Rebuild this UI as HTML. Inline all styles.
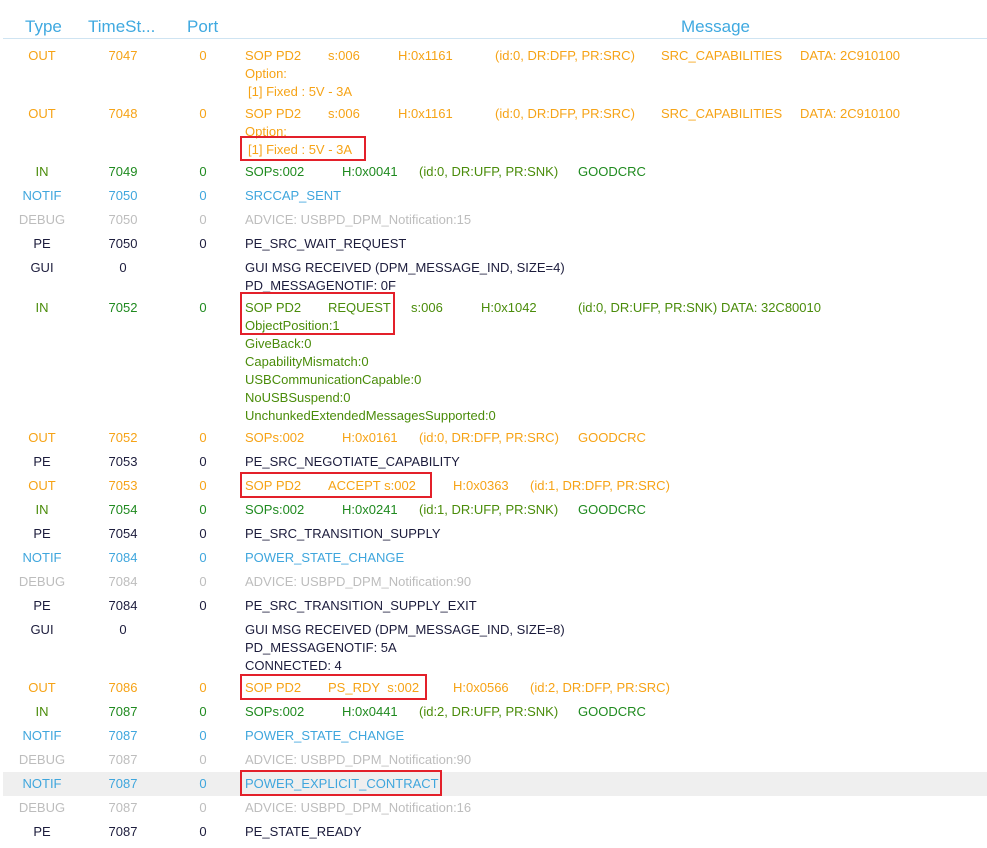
<!DOCTYPE html>
<html><head><meta charset="utf-8"><style>
*{margin:0;padding:0;box-sizing:border-box}
body{width:987px;height:848px;background:#fff;font-family:"Liberation Sans",sans-serif;font-size:13px;position:relative;overflow:hidden}
.h{position:absolute;top:17px;font-size:17px;color:#3fa9e0}
.hl{position:absolute;left:3px;top:38px;width:984px;height:1px;background:#cfe4f2}
.r{position:absolute;left:0;width:987px;line-height:18px;height:18px;margin-top:1px}
.r span{position:absolute;white-space:nowrap}
.c1{left:0;width:84px;text-align:center}
.c2{left:84px;width:78px;text-align:center}
.c3{left:183px;width:40px;text-align:center}
.o{color:#f6a316}.g{color:#1f8a1f}.gi{color:#4a8c0a}.b{color:#3fa6dd}.d{color:#bdbdbd}.k{color:#1c1c3c}
.box{position:absolute;border:2px solid #e3202a}
.hi{position:absolute;left:3px;top:772px;width:984px;height:24px;background:#efefef}
</style></head><body>
<div class="h" style="left:25px">Type</div>
<div class="h" style="left:88px">TimeSt...</div>
<div class="h" style="left:187px">Port</div>
<div class="h" style="left:681px">Message</div>
<div class="hl"></div>
<div class="hi"></div>

<div class="r o" style="top:46px"><span class="c1">OUT</span><span class="c2">7047</span><span class="c3">0</span><span style="left:245px">SOP PD2</span><span style="left:328px">s:006</span><span style="left:398px">H:0x1161</span><span style="left:495px">(id:0, DR:DFP, PR:SRC)</span><span style="left:661px">SRC_CAPABILITIES</span><span style="left:800px">DATA: 2C910100</span></div>
<div class="r o" style="top:64px"><span style="left:245px">Option:</span></div>
<div class="r o" style="top:82px"><span style="left:248px">[1] Fixed : 5V - 3A</span></div>

<div class="r o" style="top:104px"><span class="c1">OUT</span><span class="c2">7048</span><span class="c3">0</span><span style="left:245px">SOP PD2</span><span style="left:328px">s:006</span><span style="left:398px">H:0x1161</span><span style="left:495px">(id:0, DR:DFP, PR:SRC)</span><span style="left:661px">SRC_CAPABILITIES</span><span style="left:800px">DATA: 2C910100</span></div>
<div class="r o" style="top:122px"><span style="left:245px">Option:</span></div>
<div class="r o" style="top:140px"><span style="left:248px">[1] Fixed : 5V - 3A</span></div>

<div class="r g" style="top:162px"><span class="c1 gi">IN</span><span class="c2">7049</span><span class="c3">0</span><span style="left:245px">SOPs:002</span><span style="left:342px">H:0x0041</span><span style="left:419px" class="gi">(id:0, DR:UFP, PR:SNK)</span><span style="left:578px">GOODCRC</span></div>
<div class="r b" style="top:186px"><span class="c1">NOTIF</span><span class="c2">7050</span><span class="c3">0</span><span style="left:245px">SRCCAP_SENT</span></div>
<div class="r d" style="top:210px"><span class="c1">DEBUG</span><span class="c2">7050</span><span class="c3">0</span><span style="left:245px">ADVICE: USBPD_DPM_Notification:15</span></div>
<div class="r k" style="top:234px"><span class="c1">PE</span><span class="c2">7050</span><span class="c3">0</span><span style="left:245px">PE_SRC_WAIT_REQUEST</span></div>
<div class="r k" style="top:258px"><span class="c1">GUI</span><span class="c2">0</span><span style="left:245px">GUI MSG RECEIVED (DPM_MESSAGE_IND, SIZE=4)</span></div>
<div class="r k" style="top:276px"><span style="left:245px">PD_MESSAGENOTIF: 0F</span></div>

<div class="r g" style="top:298px"><span class="c1 gi">IN</span><span class="c2">7052</span><span class="c3">0</span><span style="left:245px" class="gi">SOP PD2</span><span style="left:328px" class="gi">REQUEST</span><span style="left:411px" class="gi">s:006</span><span style="left:481px" class="gi">H:0x1042</span><span style="left:578px" class="gi">(id:0, DR:UFP, PR:SNK)</span><span style="left:721px" class="gi">DATA: 32C80010</span></div>
<div class="r gi" style="top:316px"><span style="left:245px">ObjectPosition:1</span></div>
<div class="r gi" style="top:334px"><span style="left:245px">GiveBack:0</span></div>
<div class="r gi" style="top:352px"><span style="left:245px">CapabilityMismatch:0</span></div>
<div class="r gi" style="top:370px"><span style="left:245px">USBCommunicationCapable:0</span></div>
<div class="r gi" style="top:388px"><span style="left:245px">NoUSBSuspend:0</span></div>
<div class="r gi" style="top:406px"><span style="left:245px">UnchunkedExtendedMessagesSupported:0</span></div>

<div class="r o" style="top:428px"><span class="c1">OUT</span><span class="c2">7052</span><span class="c3">0</span><span style="left:245px">SOPs:002</span><span style="left:342px">H:0x0161</span><span style="left:419px">(id:0, DR:DFP, PR:SRC)</span><span style="left:578px">GOODCRC</span></div>
<div class="r k" style="top:452px"><span class="c1">PE</span><span class="c2">7053</span><span class="c3">0</span><span style="left:245px">PE_SRC_NEGOTIATE_CAPABILITY</span></div>
<div class="r o" style="top:476px"><span class="c1">OUT</span><span class="c2">7053</span><span class="c3">0</span><span style="left:245px">SOP PD2</span><span style="left:328px">ACCEPT s:002</span><span style="left:453px">H:0x0363</span><span style="left:530px">(id:1, DR:DFP, PR:SRC)</span></div>
<div class="r g" style="top:500px"><span class="c1 gi">IN</span><span class="c2">7054</span><span class="c3">0</span><span style="left:245px">SOPs:002</span><span style="left:342px">H:0x0241</span><span style="left:419px" class="gi">(id:1, DR:UFP, PR:SNK)</span><span style="left:578px">GOODCRC</span></div>
<div class="r k" style="top:524px"><span class="c1">PE</span><span class="c2">7054</span><span class="c3">0</span><span style="left:245px">PE_SRC_TRANSITION_SUPPLY</span></div>
<div class="r b" style="top:548px"><span class="c1">NOTIF</span><span class="c2">7084</span><span class="c3">0</span><span style="left:245px">POWER_STATE_CHANGE</span></div>
<div class="r d" style="top:572px"><span class="c1">DEBUG</span><span class="c2">7084</span><span class="c3">0</span><span style="left:245px">ADVICE: USBPD_DPM_Notification:90</span></div>
<div class="r k" style="top:596px"><span class="c1">PE</span><span class="c2">7084</span><span class="c3">0</span><span style="left:245px">PE_SRC_TRANSITION_SUPPLY_EXIT</span></div>
<div class="r k" style="top:620px"><span class="c1">GUI</span><span class="c2">0</span><span style="left:245px">GUI MSG RECEIVED (DPM_MESSAGE_IND, SIZE=8)</span></div>
<div class="r k" style="top:638px"><span style="left:245px">PD_MESSAGENOTIF: 5A</span></div>
<div class="r k" style="top:656px"><span style="left:245px">CONNECTED: 4</span></div>
<div class="r o" style="top:678px"><span class="c1">OUT</span><span class="c2">7086</span><span class="c3">0</span><span style="left:245px">SOP PD2</span><span style="left:328px">PS_RDY&nbsp; s:002</span><span style="left:453px">H:0x0566</span><span style="left:530px">(id:2, DR:DFP, PR:SRC)</span></div>
<div class="r g" style="top:702px"><span class="c1 gi">IN</span><span class="c2">7087</span><span class="c3">0</span><span style="left:245px">SOPs:002</span><span style="left:342px">H:0x0441</span><span style="left:419px" class="gi">(id:2, DR:UFP, PR:SNK)</span><span style="left:578px">GOODCRC</span></div>
<div class="r b" style="top:726px"><span class="c1">NOTIF</span><span class="c2">7087</span><span class="c3">0</span><span style="left:245px">POWER_STATE_CHANGE</span></div>
<div class="r d" style="top:750px"><span class="c1">DEBUG</span><span class="c2">7087</span><span class="c3">0</span><span style="left:245px">ADVICE: USBPD_DPM_Notification:90</span></div>
<div class="r b" style="top:774px"><span class="c1">NOTIF</span><span class="c2">7087</span><span class="c3">0</span><span style="left:245px">POWER_EXPLICIT_CONTRACT</span></div>
<div class="r d" style="top:798px"><span class="c1">DEBUG</span><span class="c2">7087</span><span class="c3">0</span><span style="left:245px">ADVICE: USBPD_DPM_Notification:16</span></div>
<div class="r k" style="top:822px"><span class="c1">PE</span><span class="c2">7087</span><span class="c3">0</span><span style="left:245px">PE_STATE_READY</span></div>

<div class="box" style="left:240px;top:136px;width:126px;height:25px"></div>
<div class="box" style="left:240px;top:292px;width:155px;height:43px"></div>
<div class="box" style="left:240px;top:472px;width:192px;height:26px"></div>
<div class="box" style="left:240px;top:674px;width:187px;height:26px"></div>
<div class="box" style="left:240px;top:770px;width:202px;height:26px"></div>
</body></html>
